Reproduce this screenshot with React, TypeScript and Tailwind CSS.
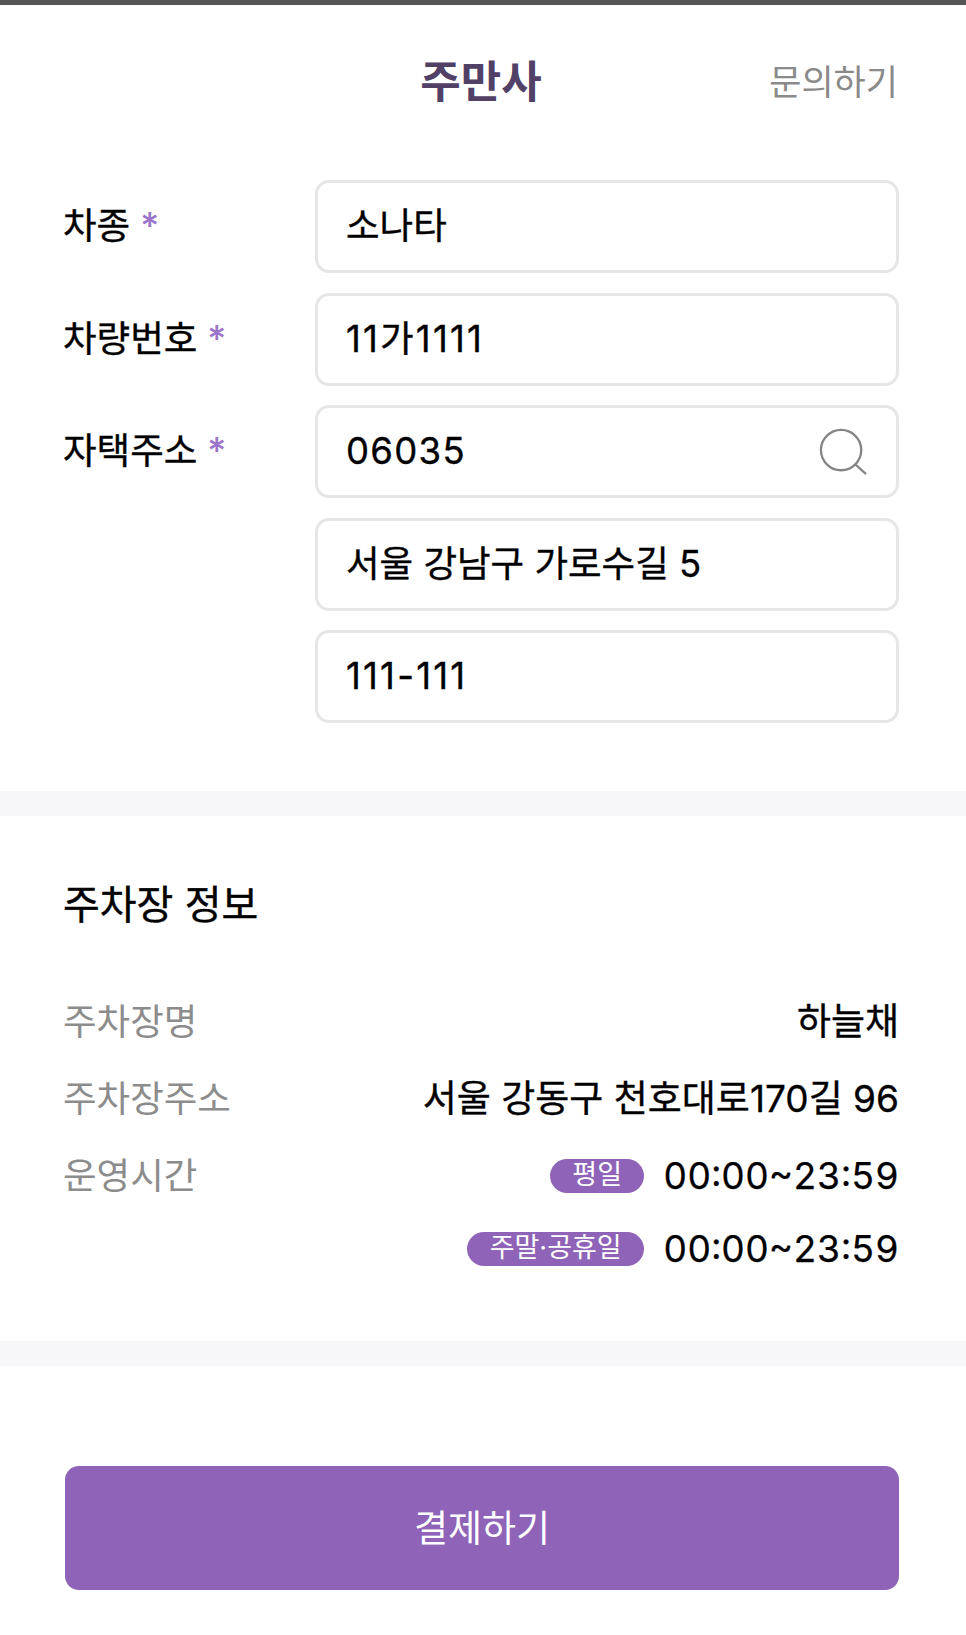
const font = "font-['Inter','Noto_Sans_CJK_KR',sans-serif]";

function Field({ value, icon, tracking }: { value: string; icon?: boolean; tracking?: string }) {
  return (
    <div className="flex h-[93px] items-center justify-between rounded-[14px] border-[3px] border-[#e6e6e6] bg-white pl-[28px] pr-[29px] text-[36.5px] text-black [-webkit-text-stroke:0.35px_black]">
      <span className={tracking}>{value}</span>
      {icon && (
        <svg width="48" height="48" viewBox="0 0 50 50" fill="none" stroke="#858585" strokeWidth="2.4">
          <circle cx="23" cy="23" r="21" />
          <path d="M38 38 L49 48" />
        </svg>
      )}
    </div>
  );
}

function Label({ text }: { text: string }) {
  return (
    <div className="flex h-[93px] items-start pt-[19px] text-[36.5px] text-black">
      <span className="[-webkit-text-stroke:0.35px_black]">{text}</span>
      <span className="ml-[10px] font-medium text-[#9a75c9]">*</span>
    </div>
  );
}

function InfoRow({ label, value }: { label: string; value: string }) {
  return (
    <div className="flex h-[77px] items-center justify-between">
      <span className="text-[#8c8c8c]">{label}</span>
      <span className="text-[37px] text-black [-webkit-text-stroke:0.35px_black]">{value}</span>
    </div>
  );
}

function Hours({ tag, pillWidth }: { tag: string; pillWidth: string }) {
  return (
    <div className="flex items-center justify-end gap-[19px]">
      <span className={`flex h-[34px] items-center justify-center rounded-full bg-[#8e63b8] pb-[3px] text-[27px] leading-none text-white ${pillWidth}`}>
        {tag}
      </span>
      <span className="text-[37px] tabular-nums text-black [-webkit-text-stroke:0.25px_black]">00:00~23:59</span>
    </div>
  );
}

export default function App() {
  return (
    <div className={`${font} h-[1635px] w-[966px] overflow-hidden bg-white`}>
      <div className="h-[5px] bg-[#555555]" />
      <header className="relative flex h-[175px] items-center justify-center pb-[21px]">
        <h1 className="mr-[4px] text-[44px] font-bold text-[#524166]">주만사</h1>
        <span className="absolute right-[68px] top-[52px] text-[35px] leading-[50px] text-[#8a8a8a]">문의하기</span>
      </header>

      <section className="grid grid-cols-[252px_1fr] gap-y-[19.5px] pl-[63px] pr-[67px]">
        <Label text="차종" />
        <Field value="소나타" />
        <Label text="차량번호" />
        <Field value="11가1111" tracking="tracking-[2.2px]" />
        <Label text="자택주소" />
        <Field value="06035" icon tracking="tracking-[1.3px]" />
        <div />
        <Field value="서울 강남구 가로수길 5" />
        <div />
        <Field value="111-111" tracking="tracking-[2.2px]" />
      </section>

      <div className="mt-[68px] h-[25px] bg-[#f7f7f9]" />

      <section className="pl-[63px] pr-[67px] pt-[64px]">
        <h2 className="text-[40px] leading-[50px] text-black [-webkit-text-stroke:0.4px_black]">주차장 정보</h2>
        <div className="mt-[53.5px] text-[36.5px]">
          <InfoRow label="주차장명" value="하늘채" />
          <InfoRow label="주차장주소" value="서울 강동구 천호대로170길 96" />
          <div className="flex h-[77px] items-center justify-between">
            <span className="text-[#8c8c8c]">운영시간</span>
            <Hours tag="평일" pillWidth="w-[94px]" />
          </div>
          <div className="mt-[6.5px]">
            <Hours tag="주말·공휴일" pillWidth="w-[177px]" />
          </div>
        </div>
      </section>

      <div className="mt-[64px] h-[25px] bg-[#f7f7f9]" />

      <div className="pl-[65px] pr-[67px] pt-[100px]">
        <button className="flex h-[124px] w-full items-center justify-center rounded-[14px] bg-[#8e63b8] pt-[3px] text-[37px] text-white">
          결제하기
        </button>
      </div>
    </div>
  );
}
